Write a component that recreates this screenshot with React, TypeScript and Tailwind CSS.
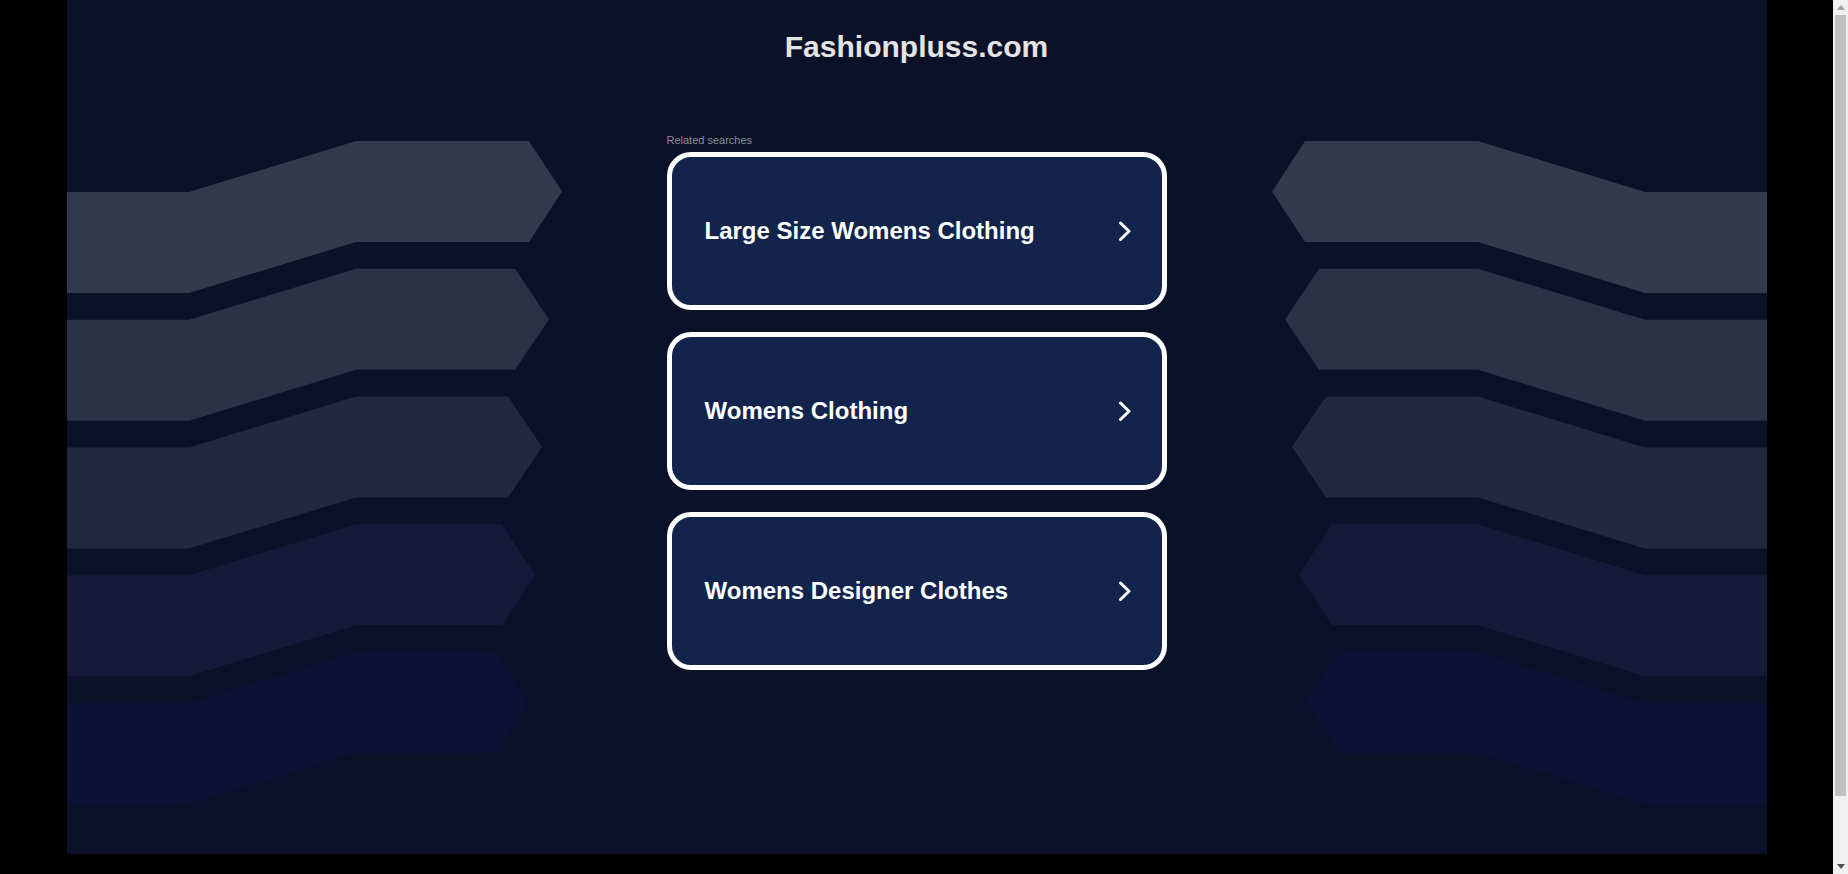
const searches = [
  "Large Size Womens Clothing",
  "Womens Clothing",
  "Womens Designer Clothes",
];

// background arrow bands, top of the inner flat part + colour + where the point sits
const bands = [
  { top: 141, end: 462, tip: 495, fill: "#323a4d" },
  { top: 268.75, end: 448, tip: 482, fill: "#2b3247" },
  { top: 396.5, end: 441, tip: 475, fill: "#232841" },
  { top: 524.25, end: 435, tip: 468, fill: "#161a38" },
  { top: 652, end: 428, tip: 461, fill: "#0b1235" },
];

function bandPoints(b: (typeof bands)[number]) {
  const t = b.top;
  return [
    [0, t + 51],
    [122, t + 51],
    [289, t],
    [b.end, t],
    [b.tip, t + 50.5],
    [b.end, t + 101],
    [289, t + 101],
    [122, t + 152],
    [0, t + 152],
  ]
    .map((p) => p.join(","))
    .join(" ");
}

function Bands({ flip }: { flip?: boolean }) {
  return (
    <svg
      width="600"
      height="854"
      viewBox="0 0 600 854"
      className={flip ? "shrink-0 -scale-x-100" : "shrink-0"}
    >
      {bands.map((b, i) => (
        <polygon key={i} points={bandPoints(b)} fill={b.fill} />
      ))}
    </svg>
  );
}

function Chevron() {
  return (
    <svg width="14" height="20" viewBox="0 0 14 20" fill="none">
      <path
        d="M2.5 2 L11 10.25 L2.5 18.5"
        stroke="#ffffff"
        strokeWidth="3"
        strokeLinecap="round"
        strokeLinejoin="round"
      />
    </svg>
  );
}

// the browser's own scrollbar, as seen in the capture
function Scrollbar() {
  return (
    <div className="flex h-full w-[15px] shrink-0 flex-col bg-[#f1f1f1]">
      <div className="flex h-[15px] items-center justify-center">
        <svg width="8" height="5" viewBox="0 0 8 5">
          <polygon points="4,0 8,5 0,5" fill="#a3a3a3" />
        </svg>
      </div>
      <div className="flex-1 px-[2px]">
        <div className="h-[781px] bg-[#c1c1c1]" />
      </div>
      <div className="flex h-[15px] items-center justify-center">
        <svg width="8" height="5" viewBox="0 0 8 5">
          <polygon points="0,0 8,0 4,5" fill="#505050" />
        </svg>
      </div>
    </div>
  );
}

export default function App() {
  return (
    <div className="flex h-[874px] overflow-hidden bg-black font-['Liberation_Sans',Arial,sans-serif]">
      <div className="flex-1">
        <div className="mx-auto flex h-[854px] w-[1700px] bg-[#0a1128]">
          <Bands />

          <main className="flex w-[500px] shrink-0 flex-col">
            <h1 className="pt-[30px] text-center text-[30px] font-bold leading-[34px] text-[#e4e4e4]">
              Fashionpluss.com
            </h1>

            <p className="mt-[70px] text-[11px] leading-[13px] text-[#8c9099]">
              Related searches
            </p>

            <div className="mt-[5px] flex flex-col gap-[22px]">
              {searches.map((s) => (
                <a
                  key={s}
                  href="#"
                  className="flex h-[158px] items-center justify-between rounded-[24px] border-[5px] border-white bg-[#12244b] pl-[33px] pr-[30px]"
                >
                  <span className="text-[24px] font-bold leading-[28px] text-white">
                    {s}
                  </span>
                  <Chevron />
                </a>
              ))}
            </div>
          </main>

          <Bands flip />
        </div>
      </div>
      <Scrollbar />
    </div>
  );
}
